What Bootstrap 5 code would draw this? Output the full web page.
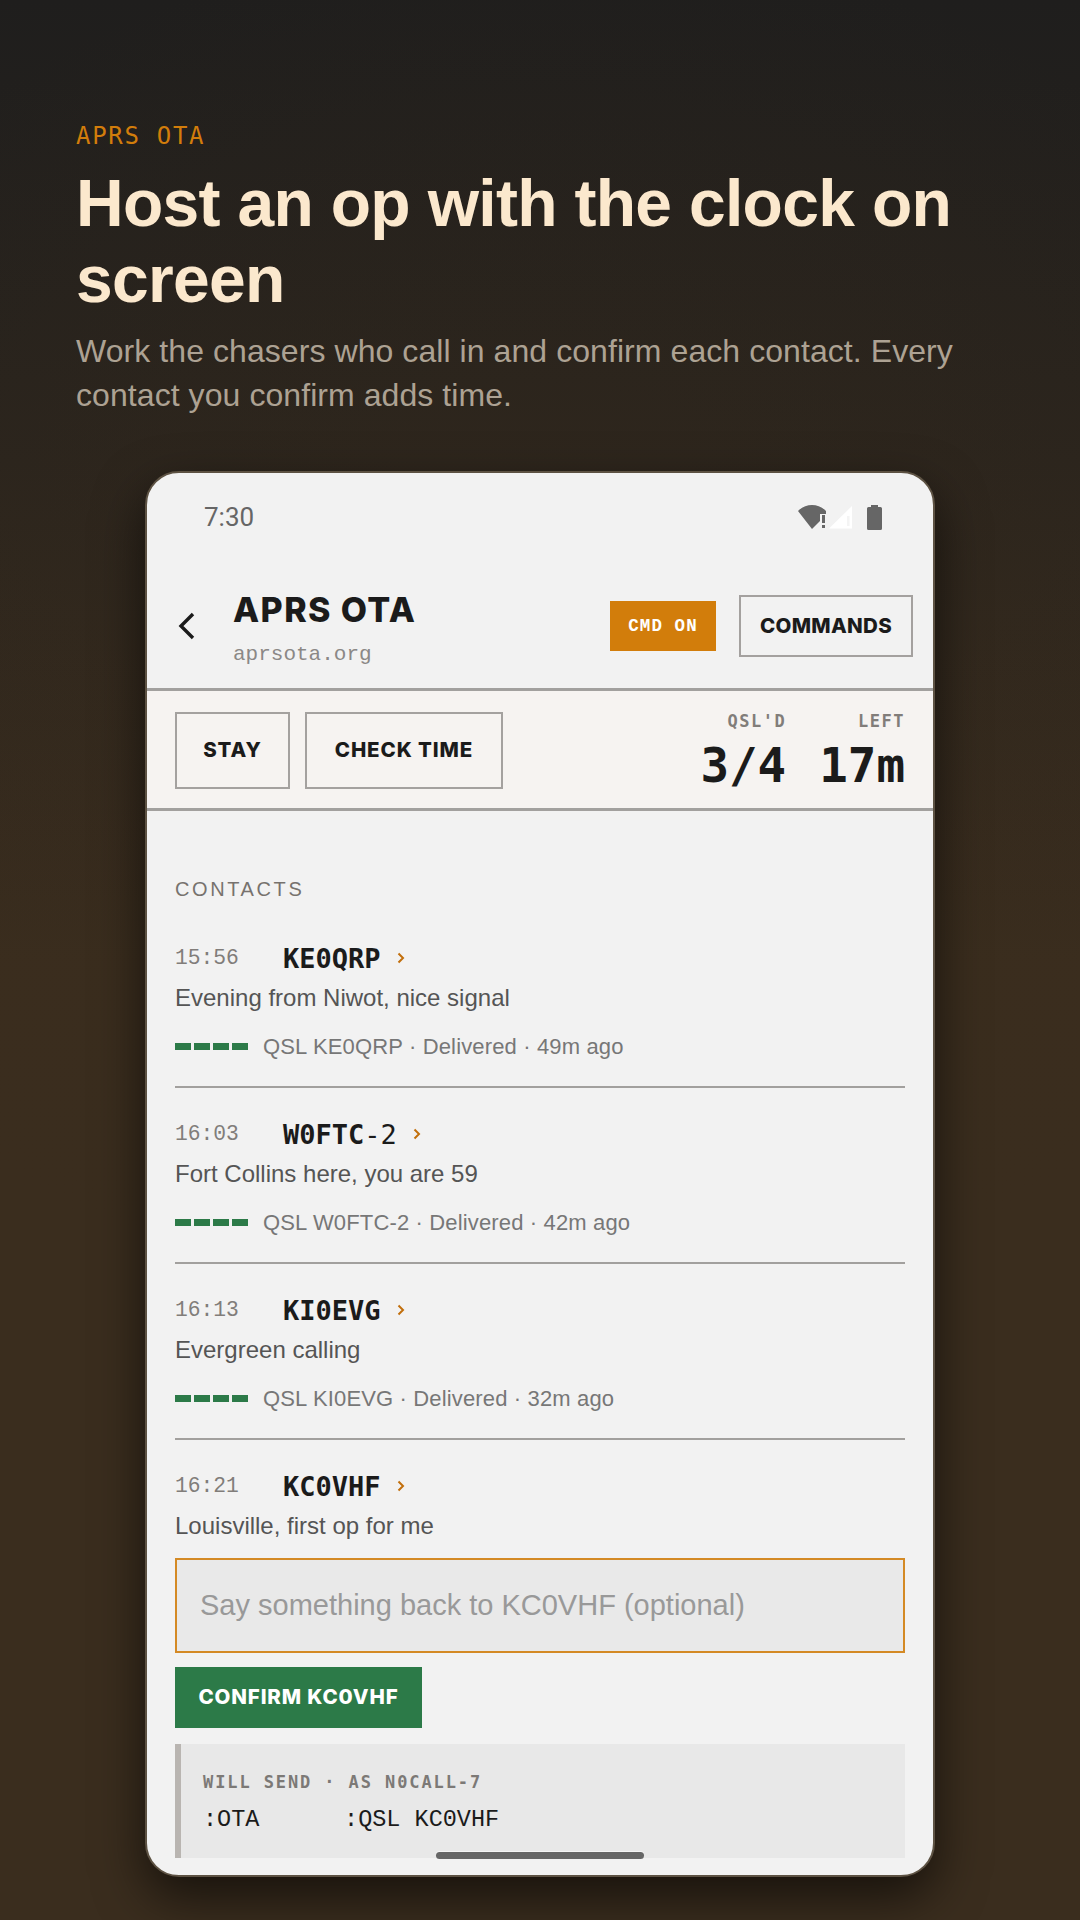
<!DOCTYPE html>
<html lang="en"><head><meta charset="utf-8"><title>APRS OTA</title>
<link href="https://cdn.jsdelivr.net/npm/bootstrap@5.3.0/dist/css/bootstrap.min.css" rel="stylesheet">
<script src="https://cdn.jsdelivr.net/npm/bootstrap@5.3.0/dist/js/bootstrap.bundle.min.js"></script>
<style>
html,body{margin:0;height:1920px;overflow:hidden}
body{width:1080px;background:radial-gradient(ellipse 900px 700px at 540px 640px,rgba(58,44,28,.35),transparent),linear-gradient(180deg,#1f1e1d 0,#2a241d 24%,#3a2d1e 50%,#3a2d1e 100%);font-family:"Liberation Sans",Arial,sans-serif}
.mono{font-family:"Liberation Mono",monospace}
.monob{font-family:"DejaVu Sans Mono",monospace}
.hero{padding:118px 76px 0;height:471px}
.eyebrow{font-size:24px;line-height:36px;letter-spacing:1.7px;color:#d27d0b;margin-bottom:11px}
.headline{font-size:66px;line-height:76px;font-weight:700;color:#fbe8cd;margin:0 0 12px;letter-spacing:-.7px}
.subline{font-size:32px;line-height:44px;color:#ada293;margin:0;letter-spacing:.07px}
.phone{width:790px;height:1406px;margin-left:145px;border:2px solid #5d5243;border-radius:34px;background:#f2f2f2;box-shadow:0 20px 50px rgba(0,0,0,.6);position:relative;overflow:hidden}
.statusbar{height:86px;padding:0 50px 0 57px;color:#666;font-size:26px;font-family:Roboto,sans-serif}
.clock{margin-top:2px}
.apphead{height:132px;padding:5px 20px 0 31px;border-bottom:3px solid #a2a09e}
.back{width:55px}
.titleblock{padding-top:5px}
.apptitle{font-family:Inter,"Liberation Sans",sans-serif;font-size:34px;line-height:40px;font-weight:800;color:#1b1b1b;letter-spacing:1.4px}
.appsub{font-size:21px;line-height:26px;color:#8b8886;margin-top:12px}
.cmdtag{width:106px;height:50px;background:#d27d0b;color:#fff;font-size:17.500px;font-weight:700;letter-spacing:1.1px;margin-right:23px}
.btn.outline-act{--bs-btn-border-radius:0;border:2px solid #a4a19f;background:transparent;color:#1b1b1b;font-family:Inter,"Liberation Sans",sans-serif;font-weight:800;font-size:20.500px;padding:0;display:flex;align-items:center;justify-content:center;letter-spacing:.9px}
.btn.w-cmds{width:174px;height:62px;letter-spacing:.3px}
.actstrip{height:120px;padding:2px 28px 0 28px;background:#f6f3f1;border-bottom:3px solid #a2a09e}
.btn.w-stay{width:115px;height:77px;margin-right:15px}
.btn.w-check{width:198px;height:77px}
.statcol{text-align:right;padding-top:3px}
.statlab{font-size:17px;line-height:20px;font-weight:700;letter-spacing:1.5px;color:#817d7a}
.statval{font-size:47.500px;line-height:54px;font-weight:700;color:#1b1b1b;margin-top:8px}
.statgap{margin-right:33px}
.listwrap{padding:66px 28px 0}
.seclab{font-size:20px;line-height:24px;letter-spacing:2.6px;color:#77726e;margin-bottom:11px}
.contact{height:176px;border-bottom:2px solid #a2a09e;padding-top:28px}
.contact.open{height:auto;border:0}
.toprow{height:38px}
.stamp{width:108px;font-size:21.300px;color:#817d7a}
.caller{font-size:27px;font-weight:700;color:#1b1b1b}
.caller span{font-weight:400}
.chev{margin-left:16px;margin-top:-3px}
.msg{font-size:24px;line-height:30px;color:#555;margin-top:5px}
.delivery{margin-top:18px;height:30px;font-size:22px;color:#777;letter-spacing:.15px}
.dashes{width:73px;margin-right:15px}
.dashes i{display:block;width:16px;height:7px;background:#2c7a48}
.reply{height:95px;margin-top:17px;border:2px solid #d48a25;background:#e9e9e9;font-size:29px;color:#999;padding-left:23px}
.btn.confirmbtn{--bs-btn-border-radius:0;width:247px;height:61px;margin-top:14px;background:#2c7a48;border:0;color:#fff;font-family:Inter,"Liberation Sans",sans-serif;font-weight:800;font-size:20.500px;padding:0;display:flex;align-items:center;justify-content:center;letter-spacing:.85px}
.sendbox{height:114px;margin-top:16px;border-left:6px solid #b9b5b1;background:#e8e8e8;padding:27px 0 0 22px}
.sendlab{font-size:17px;line-height:22px;font-weight:700;letter-spacing:1.9px;color:#7c7976}
.sendval{font-size:23.500px;line-height:30px;color:#1b1b1b;margin-top:12px;white-space:pre}
.homebar{position:absolute;left:289px;bottom:16px;width:208px;height:7px;border-radius:4px;background:#666;box-shadow:0 -1px 0 #f5f5f5}
</style></head>
<body>
<header class="hero">
<div class="eyebrow monob">APRS OTA</div>
<h1 class="headline">Host an op with the clock on screen</h1>
<p class="subline">Work the chasers who call in and confirm each contact. Every contact you confirm adds time.</p>
</header>
<main class="phone">
<div class="statusbar d-flex align-items-center justify-content-between">
<span class="clock">7:30</span>
<svg width="85" height="27" viewBox="0 0 85 27"><path d="M0 8C4 4 9 2 14 2s10 2 14 6v3h-6v7l-8 8z" fill="#666"/><rect x="24" y="12" width="3" height="8" fill="#666"/><rect x="24" y="22" width="3" height="3" fill="#666"/><path d="M31 25.500 54 3v22.500z" fill="#fff"/><rect x="49" y="13" width="2.500" height="10" fill="#f4f4f4"/><path d="M69 5.500a1.500 1.500 0 0 1 1.500-1.500H73V2h7v2h2.500A1.500 1.500 0 0 1 84 5.500V25.500a1.500 1.500 0 0 1-1.500 1.500h-12a1.500 1.500 0 0 1-1.500-1.500z" fill="#666"/></svg>
</div>
<div class="apphead d-flex align-items-center">
<div class="back d-flex"><svg width="18" height="28" viewBox="0 0 18 28" fill="none"><path d="M15 2 3 14l12 12" stroke="#1b1b1b" stroke-width="3.400"/></svg></div>
<div class="flex-grow-1 titleblock"><div class="apptitle">APRS OTA</div><div class="appsub mono">aprsota.org</div></div>
<div class="cmdtag mono d-flex align-items-center justify-content-center">CMD ON</div>
<button class="btn outline-act w-cmds" type="button">COMMANDS</button>
</div>
<div class="actstrip d-flex align-items-center">
<button class="btn outline-act w-stay" type="button">STAY</button>
<button class="btn outline-act w-check" type="button">CHECK TIME</button>
<div class="ms-auto d-flex monob">
<div class="statcol statgap"><div class="statlab">QSL'D</div><div class="statval">3/4</div></div>
<div class="statcol"><div class="statlab">LEFT</div><div class="statval">17m</div></div>
</div>
</div>
<div class="listwrap">
<div class="seclab">CONTACTS</div>
<div class="contact">
<div class="toprow d-flex align-items-center"><span class="stamp mono">15:56</span><span class="caller monob">KE0QRP</span><svg class="chev" width="8" height="12" viewBox="0 0 8 12" fill="none"><path d="M1.500 1.500 6 6l-4.500 4.500" stroke="#c26f0c" stroke-width="2"/></svg></div>
<div class="msg">Evening from Niwot, nice signal</div>
<div class="delivery d-flex align-items-center"><span class="dashes d-flex justify-content-between"><i></i><i></i><i></i><i></i></span>QSL KE0QRP · Delivered · 49m ago</div>
</div>
<div class="contact">
<div class="toprow d-flex align-items-center"><span class="stamp mono">16:03</span><span class="caller monob">W0FTC<span>-2</span></span><svg class="chev" width="8" height="12" viewBox="0 0 8 12" fill="none"><path d="M1.500 1.500 6 6l-4.500 4.500" stroke="#c26f0c" stroke-width="2"/></svg></div>
<div class="msg">Fort Collins here, you are 59</div>
<div class="delivery d-flex align-items-center"><span class="dashes d-flex justify-content-between"><i></i><i></i><i></i><i></i></span>QSL W0FTC-2 · Delivered · 42m ago</div>
</div>
<div class="contact">
<div class="toprow d-flex align-items-center"><span class="stamp mono">16:13</span><span class="caller monob">KI0EVG</span><svg class="chev" width="8" height="12" viewBox="0 0 8 12" fill="none"><path d="M1.500 1.500 6 6l-4.500 4.500" stroke="#c26f0c" stroke-width="2"/></svg></div>
<div class="msg">Evergreen calling</div>
<div class="delivery d-flex align-items-center"><span class="dashes d-flex justify-content-between"><i></i><i></i><i></i><i></i></span>QSL KI0EVG · Delivered · 32m ago</div>
</div>
<div class="contact open">
<div class="toprow d-flex align-items-center"><span class="stamp mono">16:21</span><span class="caller monob">KC0VHF</span><svg class="chev" width="8" height="12" viewBox="0 0 8 12" fill="none"><path d="M1.500 1.500 6 6l-4.500 4.500" stroke="#c26f0c" stroke-width="2"/></svg></div>
<div class="msg">Louisville, first op for me</div>
<div class="reply d-flex align-items-center">Say something back to KC0VHF (optional)</div>
<button class="btn confirmbtn" type="button">CONFIRM KC0VHF</button>
<div class="sendbox"><div class="sendlab monob">WILL SEND · AS N0CALL-7</div><div class="sendval mono">:OTA      :QSL KC0VHF</div></div>
</div>
</div>
<div class="homebar"></div>
</main>
</body></html>
